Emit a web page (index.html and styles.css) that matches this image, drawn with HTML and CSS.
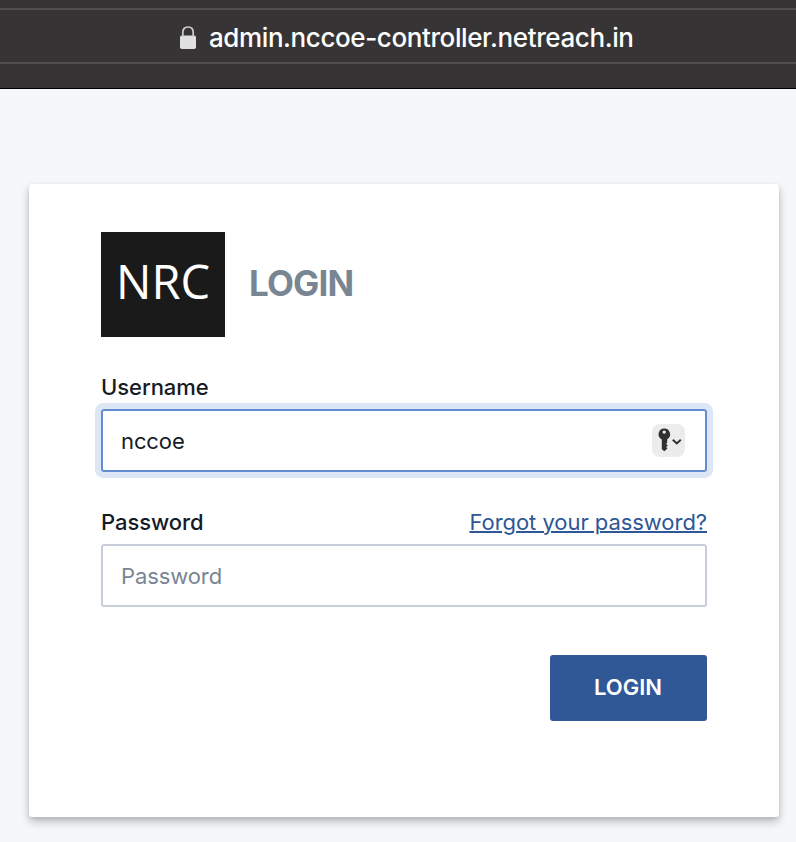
FILE: index.html
```html
<!DOCTYPE html>
<html lang="en">
<head>
<meta charset="utf-8">
<title>Login</title>
<link rel="stylesheet" href="styles.css">
</head>
<body>
<header class="browser-bar">
  <div class="address">
    <svg class="lock" width="16" height="23" viewBox="0 0 16 23"><rect x="0" y="9.500" width="16" height="13.500" rx="1.800" fill="#e0e0e0"/><path d="M2.800 11V6.500C2.800 2.800 5 1 8 1s5.200 1.800 5.200 5.500V11" fill="none" stroke="#cfcfcf" stroke-width="1.700"/></svg>
    <span class="url">admin.nccoe-controller.netreach.in</span>
  </div>
</header>
<main class="card">
  <div class="brand">
    <div class="logo"><span>NRC</span></div>
    <h1><span>LOGIN</span></h1>
  </div>
  <div class="row"><label>Username</label></div>
  <div class="field focused">
    <span class="value">nccoe</span>
    <span class="key"><svg width="33" height="33" viewBox="0 0 33 33"><path fill="#303030" fill-rule="evenodd" d="M12.200 4.500a5.800 5.800 0 0 1 3 10.800v3.200l-1 1.400 1.700 1.600-1.700 1.600 1.200 1.400-3 2.700-2.600-2V15.500A5.800 5.800 0 0 1 12.200 4.500zm0 1.900a1.700 1.700 0 1 0 0 3.400 1.700 1.700 0 0 0 0-3.400z"/><path d="m20.800 15.700 4 3.800 4-3.800" fill="none" stroke="#303030" stroke-width="1.900"/></svg></span>
  </div>
  <div class="row second"><label>Password</label><a href="#"><span>Forgot your password?</span></a></div>
  <div class="field"><span class="placeholder">Password</span></div>
  <div class="actions"><button><span>LOGIN</span></button></div>
</main>
</body>
</html>
```
FILE: styles.css
```css
* { box-sizing: border-box; }
body { margin: 0; height: 842px; background: #f5f7fb; font-family: Inter, sans-serif; overflow: hidden; color: #161c26; }
.browser-bar { height: 89px; background: #373435; border-bottom: 1px solid #000; padding-top: 8px; }
.address { height: 56px; border-top: 2px solid #504d4e; border-bottom: 2px solid #504d4e; display: flex; align-items: center; padding: 3px 0 0 180px; gap: 13px; }
.lock { display: block; }
.url { color: #fff; font-size: 26px; line-height: 32px; font-weight: 450; letter-spacing: -.4px; }
.card { margin: 95px 17px 0 29px; height: 633px; background: #fff; border-radius: 3px; padding: 48px 72px; box-shadow: 0 5px 10px rgba(0,0,0,.22), 0 2px 4px rgba(0,0,0,.1); }
.brand { display: flex; align-items: center; gap: 24px; height: 105px; }
.logo { width: 124px; height: 105px; background: #1a1a1a; color: #fff; display: flex; align-items: center; justify-content: center; font: 47px/64px "Open Sans", sans-serif; padding-bottom: 7px; }
h1 { margin: 0; padding-bottom: 4px; color: #788693; font-size: 35px; line-height: 44px; font-weight: 700; letter-spacing: -.85px; }
.row { height: 28px; margin-top: 36px; display: flex; justify-content: space-between; font-size: 22px; line-height: 28px; letter-spacing: -.05px; }
label { font-weight: 500; }
a { color: #2e5797; text-decoration: underline; text-decoration-thickness: 2px; }
.field { height: 63px; margin-top: 8px; border: 2px solid #c8ced9; border-radius: 3px; padding: 0 18px; display: flex; align-items: center; justify-content: space-between; font-size: 22px; line-height: 28px; letter-spacing: -.1px; }
.focused { border-color: #628ccf; box-shadow: 0 0 0 6px #dce6f4; }
.placeholder { color: #788693; }
.key { width: 33px; height: 33px; margin-right: 2.500px; background: #ececec; border-radius: 8px; }
.key svg { display: block; }
.actions { display: flex; justify-content: flex-end; margin-top: 48px; }
button { width: 157px; height: 66px; border: 0; border-radius: 3px; background: #305896; color: #fff; font: 600 22px/28px Inter, sans-serif; padding: 0 1px 2px 0; }
```
